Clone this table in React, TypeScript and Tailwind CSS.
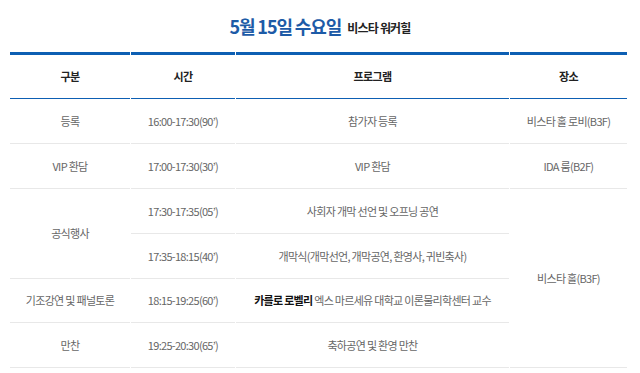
import React from "react";

const font = { fontFamily: '"Noto Sans CJK KR", "Noto Sans", sans-serif' };

const td = "h-[45px] border-b border-[#e8e8e8] p-0 text-center align-middle text-[11px] tracking-[-0.7px] text-[#666]";

export default function App() {
  return (
    <div className="w-[640px] h-[373px] bg-white overflow-hidden" style={font}>
      <div className="h-[52px] flex items-center justify-center gap-[6px] pt-[1px]">
        <span className="text-[18px] font-bold tracking-[-1.1px] text-[#1d5ba7]">5월 15일 수요일</span>
        <span className="text-[12px] font-bold tracking-[-0.8px] text-[#222] mt-[3px]">비스타 워커힐</span>
      </div>
      <table className="ml-[9px] w-[619px] border-separate border-spacing-x-[1px] border-spacing-y-0 table-fixed">
        <colgroup>
          <col className="w-[120px]" />
          <col className="w-[104px]" />
          <col className="w-[273px]" />
          <col className="w-[117px]" />
        </colgroup>
        <thead>
          <tr>
            {["구분", "시간", "프로그램", "장소"].map((h) => (
              <th
                key={h}
                className="h-[47px] border-t-[3px] border-b border-[#0d5fb3] p-0 text-center align-middle text-[11px] font-bold tracking-[-0.6px] text-[#222]"
              >
                {h}
              </th>
            ))}
          </tr>
        </thead>
        <tbody>
          <tr>
            <td className={td}>등록</td>
            <td className={td}>16:00-17:30(90’)</td>
            <td className={td}>참가자 등록</td>
            <td className={td}>비스타 홀 로비(B3F)</td>
          </tr>
          <tr>
            <td className={td}>VIP 환담</td>
            <td className={td}>17:00-17:30(30’)</td>
            <td className={td}>VIP 환담</td>
            <td className={td}>IDA 룸(B2F)</td>
          </tr>
          <tr>
            <td className={td} rowSpan={2}>공식행사</td>
            <td className={td}>17:30-17:35(05’)</td>
            <td className={td}>사회자 개막 선언 및 오프닝 공연</td>
            <td className={td} rowSpan={4}>비스타 홀(B3F)</td>
          </tr>
          <tr>
            <td className={td}>17:35-18:15(40’)</td>
            <td className={td}>개막식(개막선언, 개막공연, 환영사, 귀빈축사)</td>
          </tr>
          <tr>
            <td className={td + " !h-[44px]"}>기조강연 및 패널토론</td>
            <td className={td + " !h-[44px]"}>18:15-19:25(60’)</td>
            <td className={td + " !h-[44px]"}>
              <span className="font-bold text-[#111]">카를로 로벨리</span> 엑스 마르세유 대학교 이론물리학센터 교수
            </td>
          </tr>
          <tr>
            <td className={td}>만찬</td>
            <td className={td}>19:25-20:30(65’)</td>
            <td className={td}>축하공연 및 환영 만찬</td>
          </tr>
        </tbody>
      </table>
    </div>
  );
}
